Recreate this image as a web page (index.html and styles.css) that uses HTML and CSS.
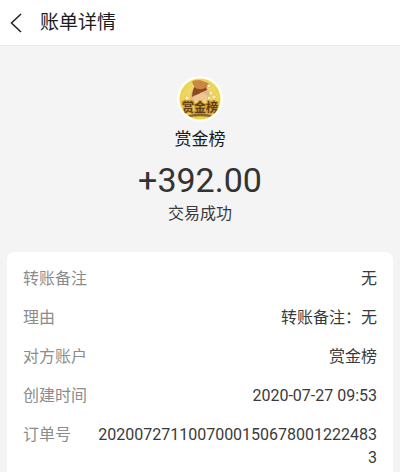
FILE: index.html
```
<!DOCTYPE html>
<html lang="zh-CN">
<head>
  <meta charset="UTF-8" />
  <meta name="viewport" content="width=device-width, initial-scale=1">
  <title>账单详情</title>
  <link rel="stylesheet" href="styles.css">
</head>
<body>
  <header class="navbar">
    <button class="back" type="button" aria-label="返回">
      <svg width="12" height="20" viewBox="0 0 12 20" fill="none" stroke="#222" stroke-width="1.5">
        <path d="M11 1 1.5 10l9.5 9" />
      </svg>
    </button>
    <h1>账单详情</h1>
  </header>

  <main>
    <section class="summary">
      <svg class="avatar" width="46" height="46" viewBox="0 0 46 46" aria-hidden="true">
        <defs>
          <clipPath id="disc"><circle cx="23" cy="23" r="20.5" /></clipPath>
          <radialGradient id="gold" cx="50%" cy="45%" r="60%">
            <stop offset="0" stop-color="#f5e488" />
            <stop offset="1" stop-color="#e6cb3c" />
          </radialGradient>
        </defs>
        <circle cx="23" cy="23" r="23" fill="#fffef4" />
        <g clip-path="url(#disc)">
          <rect width="46" height="46" fill="url(#gold)" />
          <!-- money bag -->
          <path d="M17 12c4 1 8 1 12-1 4 4 5 8 3 13l-17 1c-3-3-2-9 2-13z" fill="#e9b681" />
          <path d="M15 6c3-3 5-1 8-2 3 2 6 1 9 4l-3 4c-4 2-8 2-11 0z" fill="#c98647" />
          <path d="M17 11c4 3 9 3 12 0l1 3c-4 2-6 2-8 4-2 1-5 1-7 3 0-3 1-7 2-10z" fill="#8a4a20" />
          <path d="M18 20c4-3 9-4 12-1l1 6H15z" fill="#efc795" />
          <!-- coins -->
          <g fill="#f9f1c0" stroke="#d0a942" stroke-width=".5">
            <circle cx="32" cy="10" r="1.8" />
            <circle cx="34" cy="17" r="2" />
            <circle cx="37" cy="21" r="2" />
            <circle cx="10" cy="22" r="2" />
            <circle cx="32" cy="22" r="1.8" />
          </g>
          <text class="logo-text" x="23" y="36" text-anchor="middle">赏金榜</text>
          <path d="M11 39c8-2 16-2 24 0l-2 2c-7-1-13-1-20 0z" fill="#8a6428" />
        </g>
      </svg>
      <h2>赏金榜</h2>
      <p class="amount">+392.00</p>
      <p class="status">交易成功</p>
    </section>

    <dl class="details">
      <div class="row">
        <dt>转账备注</dt>
        <dd>无</dd>
      </div>
      <div class="row">
        <dt>理由</dt>
        <dd>转账备注：无</dd>
      </div>
      <div class="row">
        <dt>对方账户</dt>
        <dd>赏金榜</dd>
      </div>
      <div class="row">
        <dt>创建时间</dt>
        <dd>2020-07-27 09:53</dd>
      </div>
      <div class="row">
        <dt>订单号</dt>
        <dd>20200727110070001506780012224833</dd>
      </div>
    </dl>
  </main>
</body>
</html>
```

FILE: styles.css
```
* {
  box-sizing: border-box;
}
html {
  height: 100%;
}
body {
  margin: 0;
  min-height: 100%;
  display: flex;
  flex-direction: column;
  background-color: #f4f4f4;
  color: #3a3a3a;
  font-family: Roboto, "Noto Sans CJK SC", sans-serif;
  font-size: 16px;
  line-height: 23px;
}
h1, h2, p, dl, dd {
  margin: 0;
  font-weight: 400;
}
.navbar {
  display: flex;
  align-items: center;
  gap: 18px;
  padding: 8px 10px;
  background-color: #fff;
  border-bottom: 1px solid #e9e9e9;
}
.back {
  display: flex;
  padding: 0;
  border: none;
  background: none;
  cursor: pointer;
}
.navbar h1 {
  color: #1c1c1c;
  font-size: 19px;
  line-height: 29px;
}
main {
  flex: 1;
  display: flex;
  flex-direction: column;
  padding: 0 7px;
}
.summary {
  display: flex;
  flex-direction: column;
  align-items: center;
  padding: 30px 0 27px;
}
.logo-text {
  font-family: "Noto Sans CJK SC", sans-serif;
  font-size: 12px;
  font-weight: 700;
  fill: #5f3f14;
  stroke: #d0a03a;
  stroke-width: 2px;
  paint-order: stroke;
}
.summary h2 {
  margin-top: 5px;
  color: #1c1c1c;
  font-size: 17px;
  line-height: 25px;
}
.amount {
  margin-top: 8px;
  color: #333;
  font-size: 34px;
  line-height: 40px;
}
.status {
  margin-top: 2px;
}
.details {
  flex: 1;
  display: flex;
  flex-direction: column;
  gap: 16px;
  padding: 15px 16px;
  background-color: #fff;
  border-radius: 8px 8px 0 0;
}
.row {
  display: flex;
  justify-content: space-between;
  gap: 8px;
}
.row dt {
  flex: none;
  min-width: 64px;
  color: #8c8c8c;
}
.row dd {
  text-align: right;
  word-break: break-all; /* long order numbers wrap */
}
```
